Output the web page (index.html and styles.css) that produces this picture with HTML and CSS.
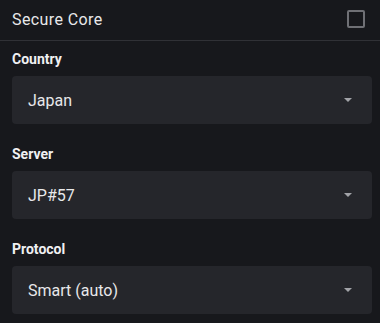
FILE: index.html
```html
<!DOCTYPE html>
<html lang="en">
<head>
  <meta charset="UTF-8">
  <meta name="viewport" content="width=device-width, initial-scale=1.0">
  <title>Connection Settings</title>
  <link rel="stylesheet" href="styles.css">
</head>
<body>
  <div class="toggle-row">
    <span>Secure Core</span>
    <span class="checkbox"></span>
  </div>

  <div class="fields">
    <div class="field">
      <label>Country</label>
      <div class="select">
        <span>Japan</span>
        <span class="arrow"></span>
      </div>
    </div>

    <div class="field">
      <label>Server</label>
      <div class="select">
        <span>JP#57</span>
        <span class="arrow"></span>
      </div>
    </div>

    <div class="field">
      <label>Protocol</label>
      <div class="select">
        <span>Smart (auto)</span>
        <span class="arrow"></span>
      </div>
    </div>
  </div>
</body>
</html>
```

FILE: styles.css
```css
body {
  font-family: Roboto, 'Liberation Sans', sans-serif;
  margin: 0;
  background-color: #17181c;
  color: #e8e8ea;
}
.toggle-row {
  display: flex;
  align-items: center;
  justify-content: space-between;
  height: 38px;
  padding: 0 15px 2px 12px;
  border-bottom: 1px solid #303136;
  font-size: 16px;
  letter-spacing: 0.4px;
}
.checkbox {
  width: 14px;
  height: 14px;
  border: 2px solid #6f7075;
  border-radius: 2px;
}
.fields {
  display: flex;
  flex-direction: column;
  gap: 20px;
  padding: 8px 8px 0 12px;
}
.field label {
  display: block;
  font-size: 14px;
  font-weight: 700;
  line-height: 20px;
  margin-bottom: 7px;
  color: #f0f0f2;
}
.select {
  display: flex;
  align-items: center;
  justify-content: space-between;
  height: 48px;
  padding: 0 20px 0 16px;
  background-color: #25262b;
  border-radius: 4px;
  font-size: 16px;
}
.arrow {
  width: 0;
  height: 0;
  border-left: 4px solid transparent;
  border-right: 4px solid transparent;
  border-top: 4px solid #a2a3a8;
}
```
